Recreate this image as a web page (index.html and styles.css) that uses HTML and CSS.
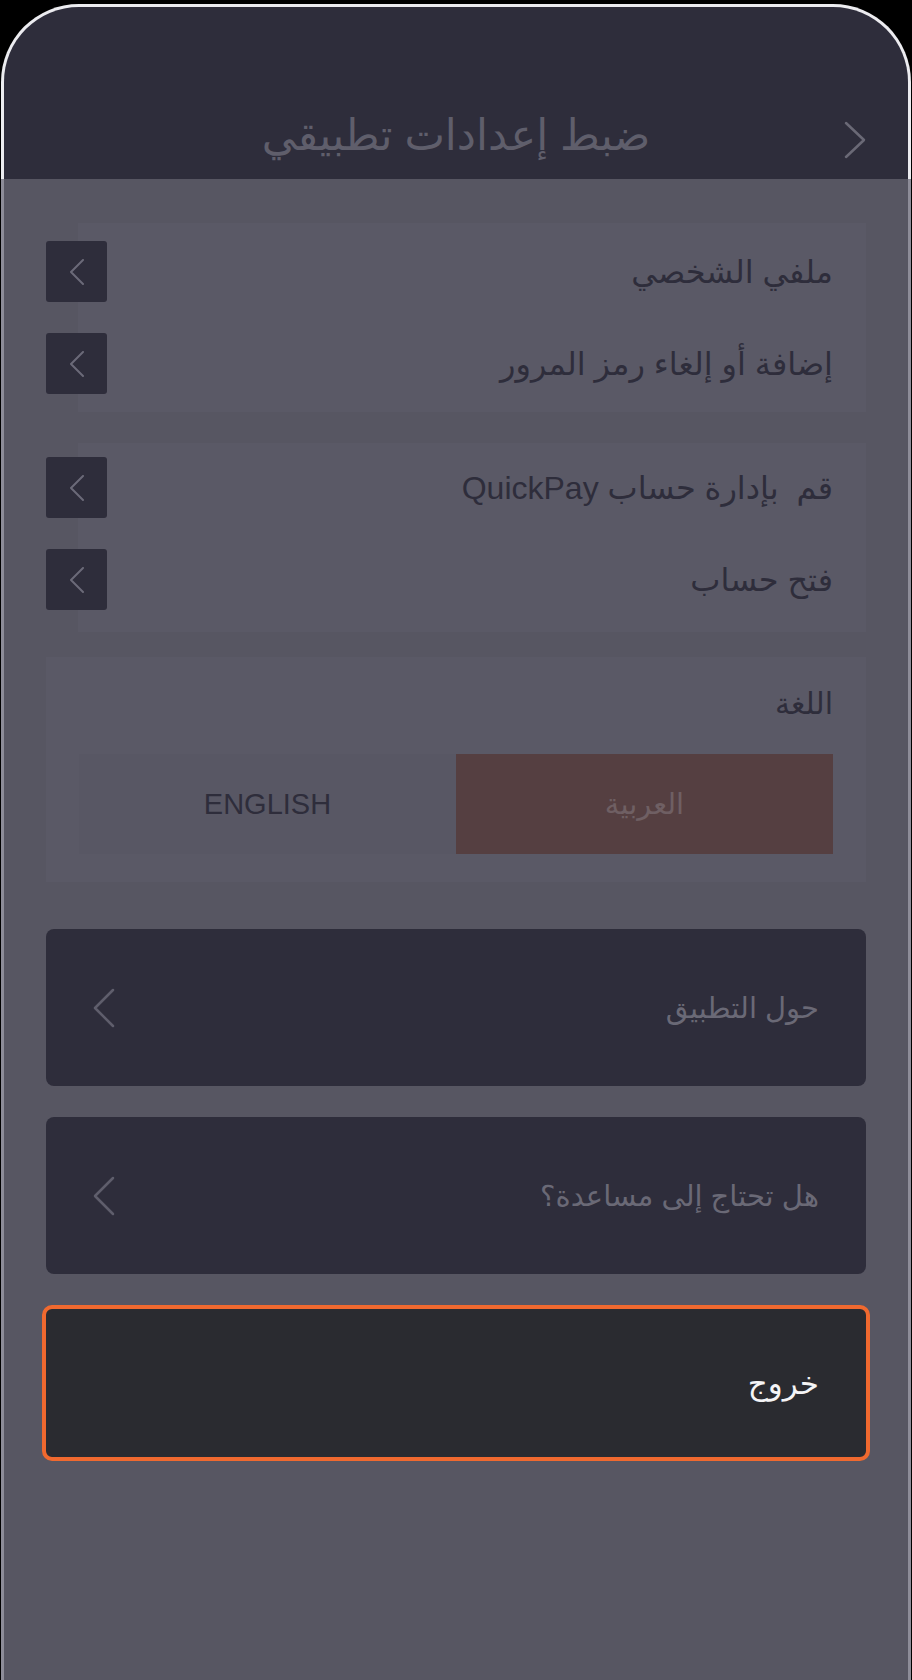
FILE: index.html
```html
<!DOCTYPE html>
<html lang="ar" dir="rtl">
<head>
  <meta charset="UTF-8">
  <meta name="viewport" content="width=device-width, initial-scale=1.0">
  <title>ضبط إعدادات تطبيقي</title>
  <link rel="stylesheet" href="styles.css">
</head>
<body>
  <div class="phone">
    <header class="header">
      <button class="back" aria-label="رجوع">
        <svg width="22" height="38" viewBox="0 0 22 38"><path d="M2 2 L20 19 L2 36" /></svg>
      </button>
      <h1>ضبط إعدادات تطبيقي</h1>
      <span></span>
    </header>

    <main class="content">
      <div class="group rows">
        <div class="row">
          <span>ملفي الشخصي</span>
          <span class="arrow-box"><svg width="16" height="26" viewBox="0 0 16 26"><path d="M14 1 L2 13 L14 25" /></svg></span>
        </div>
        <div class="row">
          <span>إضافة أو إلغاء رمز المرور</span>
          <span class="arrow-box"><svg width="16" height="26" viewBox="0 0 16 26"><path d="M14 1 L2 13 L14 25" /></svg></span>
        </div>
      </div>

      <div class="group rows group-second">
        <div class="row">
          <span class="keep-space">قم  بإدارة حساب QuickPay</span>
          <span class="arrow-box"><svg width="16" height="26" viewBox="0 0 16 26"><path d="M14 1 L2 13 L14 25" /></svg></span>
        </div>
        <div class="row">
          <span>فتح حساب</span>
          <span class="arrow-box"><svg width="16" height="26" viewBox="0 0 16 26"><path d="M14 1 L2 13 L14 25" /></svg></span>
        </div>
      </div>

      <div class="group lang">
        <div class="lang-title">اللغة</div>
        <div class="toggle">
          <button class="active">العربية</button>
          <button>ENGLISH</button>
        </div>
      </div>

      <a class="link-card about">
        <span>حول التطبيق</span>
        <svg width="22" height="40" viewBox="0 0 22 40"><path d="M20 2 L2 20 L20 38" /></svg>
      </a>
      <a class="link-card">
        <span>هل تحتاج إلى مساعدة؟</span>
        <svg width="22" height="40" viewBox="0 0 22 40"><path d="M20 2 L2 20 L20 38" /></svg>
      </a>

      <button class="logout">خروج</button>
    </main>
  </div>
</body>
</html>
```

FILE: styles.css
```css
* {
  box-sizing: border-box;
  font-family: 'Liberation Sans', 'DejaVu Sans', sans-serif;
}
body {
  margin: 0;
  background-color: #000;
}
.phone {
  margin: 4px 1px 0;
  min-height: 1676px;
  display: flex;
  flex-direction: column;
}
.header {
  height: 175px;
  background: #2e2d3b;
  border: 3px solid #ececf0;
  border-bottom: none;
  border-radius: 78px 78px 0 0;
  padding: 100px 36px 0;
  display: grid;
  grid-template-columns: 60px 1fr 60px;
  align-items: start;
}
.header h1 {
  margin: 0;
  text-align: center;
  font-size: 43px;
  font-weight: normal;
  line-height: 56px;
  color: #5f5e6b;
}
.back {
  background: none;
  border: none;
  padding: 0;
  margin: 14px 6px 0 0;
  justify-self: start;
  width: 22px;
  height: 38px;
}
.back path {
  fill: none;
  stroke: #6a6976;
  stroke-width: 2.5;
  stroke-linecap: round;
  stroke-linejoin: round;
}
.content {
  flex: 1;
  background: #575662;
  border-left: 3px solid #8d8c98;
  border-right: 3px solid #8d8c98;
  padding: 44px 42px 0;
  display: flex;
  flex-direction: column;
}
.group {
  background: #5a5966;
  padding: 18px 33px 18px 1px;
  display: flex;
  flex-direction: column;
  gap: 31px;
  margin-bottom: 31px;
}
.rows {
  margin-left: 32px;
  padding-left: 0;
}
.group-second {
  padding-top: 14px;
  padding-bottom: 22px;
  margin-bottom: 25px;
}
.row {
  display: flex;
  justify-content: space-between;
  align-items: center;
  height: 61px;
  font-size: 32px;
  color: #2e2d3b;
}
.keep-space {
  white-space: pre;
}
.arrow-box {
  width: 61px;
  height: 61px;
  margin-left: -32px;
  background: #2e2d3b;
  border-radius: 3px;
  display: flex;
  align-items: center;
  justify-content: center;
}
.arrow-box path, .link-card path {
  fill: none;
  stroke: #6b6a78;
  stroke-width: 2;
  stroke-linecap: round;
  stroke-linejoin: round;
}
.lang {
  padding: 29px 33px 28px 33px;
  gap: 32px;
  margin-bottom: 47px;
}
.lang-title {
  font-size: 30px;
  line-height: 36px;
  color: #2e2d3b;
}
.toggle {
  display: grid;
  grid-template-columns: 1fr 1fr;
  height: 100px;
}
.toggle button {
  border: none;
  background: #585764;
  font-size: 29px;
  color: #2e2d3b;
}
.toggle button.active {
  background: #553f41;
  color: #6f5f63;
  font-size: 29px;
}
.link-card {
  height: 157px;
  background: #2e2d3b;
  border-radius: 8px;
  padding: 0 47px;
  display: flex;
  justify-content: space-between;
  align-items: center;
  font-size: 29px;
  color: #6a6976;
  margin-bottom: 31px;
}
.link-card path {
  stroke: #5f5e6c;
  stroke-width: 2.5;
}
.logout {
  height: 156px;
  margin: 0 -4px;
  background: #2a2b30;
  border: 4px solid #f0692f;
  border-radius: 10px;
  padding: 0 47px;
  text-align: right;
  font-size: 31px;
  color: #f4f4f6;
}
```
